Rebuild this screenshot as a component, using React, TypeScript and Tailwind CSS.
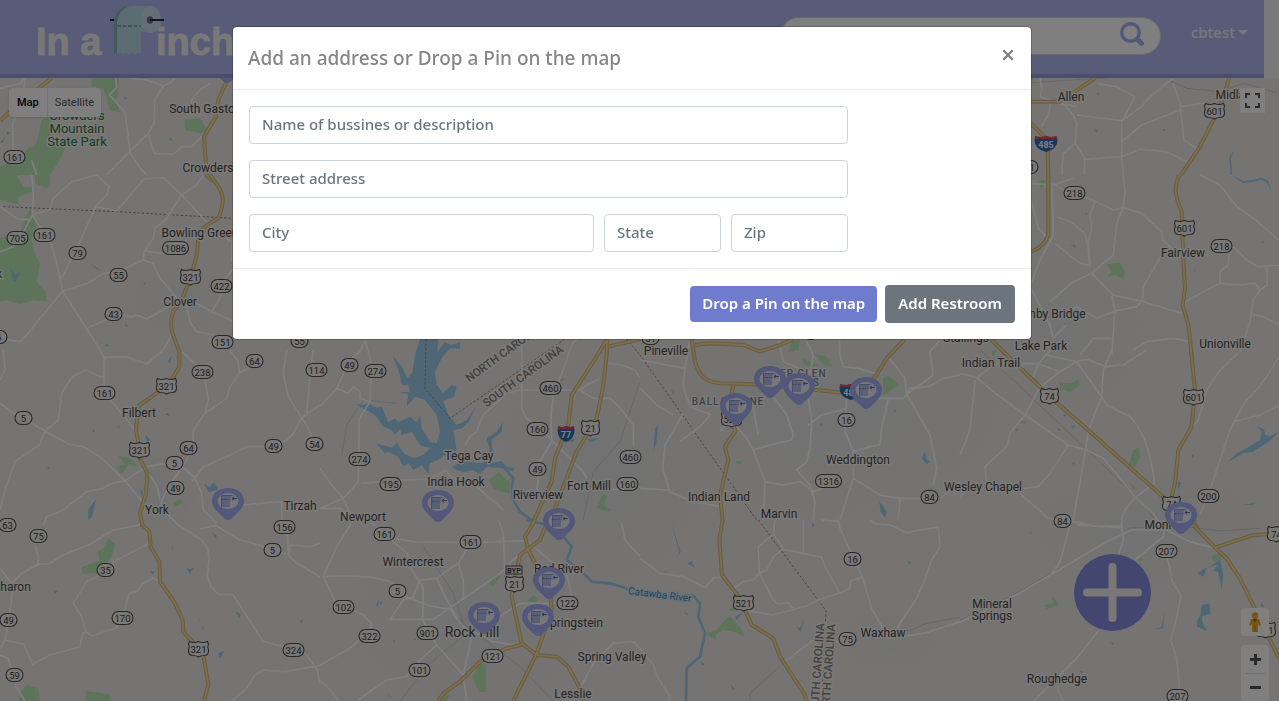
import React from "react";

type Tile = {
  x: number;
  y: number;
  roads: string;
  highways: string;
  parks: string;
  water: string;
  river?: string;
  border?: string;
  rail?: string;
};

/* Map artwork, drawn in sections at three units to the pixel. */
const tiles: Tile[] = [
  {
    x: 0,
    y: 0,
    roads:
      "M0 265L60 250L75 234M75 234L70 300L38 370L40 450M347 234L350 262L328 285L375 336L390 452M385 234L440 240L490 258L508 250L525 234M490 258L465 300L462 370L445 400L388 455L320 525M445 400L462 460L520 463L545 440L575 440L610 405M388 455L425 510L440 525M575 350L575 300L600 270L630 250M95 480L110 525",
    highways: "M0 362L60 310L155 234M682 240L655 300L648 350L612 410L620 525L640 545",
    parks:
      "M275 234H355V290L345 300L362 338L330 330L310 265L275 260ZM125 360L150 350L160 440L200 430L185 470L150 525L60 525L80 460L110 430ZM553 360L600 355L622 390L602 400L555 390ZM0 500L60 470L90 440L150 470L150 525H0Z",
    water: "M0 430L20 405L8 428ZM20 395L32 398L22 404ZM512 412L518 425L508 420ZM368 290L382 295L376 297Z",
  },
  {
    x: 960,
    y: 0,
    roads:
      "M240 234L245 270L240 290M240 290L270 300L268 340L245 380M305 305L340 345L350 370L345 430L375 475L372 525M345 430L310 460L305 525M350 345L487 362M350 320L300 310M485 365V470L375 478M410 250L470 260L525 290L515 310L487 362M640 234L600 265L560 300L545 320L487 362M640 250L660 310L665 360L672 420L715 450M660 330L545 375L485 425M485 470L540 448L620 455L690 490M485 470L490 525M660 320L735 310",
    highways: "M213 305H300L405 234M213 370L262 420L265 535M808 234L780 320L720 440L663 525",
    parks: "M213 234H225L213 245Z",
    water: "M825 450L808 470L812 525L816 525L813 475ZM410 278L420 282L412 284ZM405 388L415 392L408 398ZM608 385L618 390L610 394Z",
    rail: "M213 248L440 234M625 240L680 265L780 275L850 250L957 280",
  },
  {
    x: 0,
    y: 175,
    roads:
      "M95 0L100 60L97 120L155 210L182 315L188 348L300 525M97 120L150 103L160 70L215 20L290 0L328 35L320 60L287 95L350 108L432 12L490 8L545 60L500 130L465 160L460 190L432 230L430 255M0 95L55 133L90 133L97 120L60 190L40 215L0 230M287 95L240 200L182 315M188 348L262 325L310 295L355 290L430 255L458 265L480 310L540 380M432 228L490 235M188 348L80 480L60 500L0 490M265 458L340 425L360 420L395 425L410 420L440 432L490 405L520 385M545 60L610 130L650 170L695 200V260M545 60L590 30L610 0M560 385L570 440L590 470L640 480M570 375L635 410L700 438M635 410L665 360V325L700 280M515 480L490 525",
    highways: "M630 0C670 50 680 70 655 130C620 150 600 160 595 190L590 240L575 300L545 375L520 410C505 450 515 470 538 530",
    parks:
      "M105 0H150V25L140 40L105 25ZM0 0H50L70 35H98V50L55 65V88L0 75ZM90 100L110 150L95 190L105 240L120 265L110 320L135 350L142 380L100 375L60 388L20 375L0 380V190L60 170Z",
    water: "M30 275L45 300L60 292L45 322L38 310ZM270 265L305 288L290 282ZM430 325L438 322L434 330ZM318 505L328 512L320 516ZM375 445L385 455L378 455Z",
    border: "M10 95L350 110L700 130",
  },
  {
    x: 0,
    y: 350,
    roads:
      "M300 0L312 22V130L340 160L405 240M312 22L380 20L440 42L490 0M312 80H300L258 60L218 78L185 130L175 210L135 243L118 285L45 335L15 420L0 480M0 160L40 188L135 243L210 285L250 290L300 320L375 392L415 440L430 460L465 490L480 480M375 392L330 402L310 415L260 425L190 480L140 500L130 525M375 392L440 350L495 340L520 325L585 385M545 5L590 45L615 90L625 150L615 190M690 0L715 35L718 70L690 110L680 145L615 190L580 240L578 290L560 330L520 390L490 440L480 470M718 70L760 45M555 355L585 385L605 430L610 480L650 520M575 395L610 350L680 320L740 290H790L860 272L880 250L905 203L960 165M860 0L850 70L865 140L905 203L925 235L940 270M940 0L930 80L920 195L905 203M445 370L470 405L480 450M730 465L780 460L845 455V510M535 525L500 490M10 0L15 60L0 90",
    highways: "M538 0V50L515 90L470 130L415 168L408 240L415 280L420 325L442 370L438 430L420 490L428 530",
    parks: "M355 318L390 325L415 350L385 345L365 372L348 352L375 342ZM520 460L540 447L550 458L525 470Z",
    water:
      "M502 35L515 18L510 40ZM265 480L288 448L276 500L265 510ZM612 400L628 412L642 395L655 420L625 425ZM435 253L450 270L440 275ZM495 195L503 188L510 197ZM420 418L430 425L424 440ZM140 352L150 353L145 358ZM278 240L284 238L280 248ZM352 228L360 230L354 234Z",
  },
  {
    x: 0,
    y: 525,
    roads:
      "M65 145L115 118L148 116L190 90L270 58L340 15L420 0M105 60L115 95V118M0 130L35 175L65 145M37 200L30 260L15 345L0 370M15 345L72 358L97 418L150 390L240 365L248 325L258 320L245 275L220 235L260 170L300 150L350 105L448 55M258 320L275 333L320 318L350 308L375 250L388 205L410 200L430 175L458 160L478 168M0 392L25 400L35 440M45 480L75 528M535 0L605 45L622 70L628 100L622 150L632 185L655 208H698L790 350L860 368L915 385L935 410L950 430L960 475M695 528L740 490L765 450L790 435L850 440L945 425L960 420M645 0L720 45L770 58L815 75L865 90L890 115L960 155M860 0L866 90L872 60L930 65L960 55M600 12L650 0",
    highways: "M428 0L448 20L452 65L478 110L480 170L525 235L548 285L550 320L595 370L612 400L625 480L612 528",
    parks:
      "M245 125L298 108L293 78L310 70L325 40L345 58L340 85L322 112L300 143L248 147ZM65 495L80 480L115 490L120 528L55 528ZM258 498L328 508L330 528L256 528Z",
    water:
      "M655 385L672 378L668 390L658 402ZM560 130L568 132L580 128L570 147ZM705 258L722 268L718 278ZM900 290L908 282L905 297ZM635 22L650 32L648 40ZM450 140L465 138L458 148ZM160 196L172 198L165 206ZM515 62L520 68L516 74ZM595 275L602 290L598 285ZM606 300L614 315L608 310Z",
  },
  {
    x: 320,
    y: 335,
    roads:
      "M135 15L120 50L90 75L50 160L0 215M135 15L155 90L150 200L118 250L115 440L70 490L0 520M50 160L85 175L100 155L120 170V190L150 200M122 445L250 435L330 432L375 405L400 430L470 455L505 485L550 525M600 165L560 175L490 240L470 290L450 305L435 330M605 15V220L620 250L660 280L700 320L740 360L790 410L800 430M770 12L755 30L735 90L700 180L693 240L695 320L680 345L660 380L650 470M600 165L780 165L820 190H870L905 225L940 270V330M780 165L800 150L840 130M862 85L905 90L945 105L960 130M0 400L35 450L70 490L100 555M870 465L960 455M0 520H60L100 555",
    highways: "M862 12L820 80L755 180L745 270L705 370L695 440L640 560M862 12L860 60L850 150L830 250L770 350L740 430L705 520L680 560M865 35L960 12",
    parks: "M508 435L535 412L568 440L570 475L545 472L520 460ZM830 520L850 475L862 485L850 510L875 525L865 530Z",
    water:
      "M300 12H355L352 50L375 22L395 30L420 22V42L390 40L365 70L345 110L350 150L370 175L395 150L410 155L402 185L370 198L385 240L410 270L440 255L468 215L445 262L425 280L400 285L410 345L375 360L355 375L330 385L325 418L305 390L280 405L265 385L250 395L235 365L205 350L195 355L168 325L215 338L230 325L255 358L285 370L310 360L330 340L300 330L275 290L245 300L240 282L225 300L215 285L190 275L165 240L108 208L130 210L145 205L170 218L185 215L205 262L225 250L235 262L270 245L290 262L300 240L305 280L330 320L350 325L360 290L350 240L315 195L285 185L260 215L265 178L235 170L270 172L265 150L245 150L240 120L218 60L245 95L262 130L278 110L285 60ZM395 395L430 380L490 385L510 345L500 310L530 290L548 262L545 290L515 315L520 365L510 385L545 378L560 395L585 400L580 410L550 400L500 395L480 418L460 405L430 412L410 405ZM740 318L770 310L755 322ZM800 312L835 310L815 322ZM715 135L738 130L725 138Z",
    river: "M550 395L580 430L575 455L580 495L600 530L640 560",
    border: "M318 12L315 160L390 250L735 12M920 12L960 60",
    rail: "M230 205L130 195L80 270L65 360M960 140L900 320L820 410L790 555",
  },
  {
    x: 320,
    y: 520,
    roads:
      "M100 0L50 80L10 170M10 170L90 168L160 172L210 185L260 232L330 258L390 268L410 295L430 320M10 170L45 245L130 285L155 310L150 330L90 385L0 435M150 0L190 40L262 100L270 140L310 205L308 300L350 375L430 465L440 543M190 50L280 65L450 68L620 62M450 70L415 130L430 180V240M210 298L250 240L280 230L300 180L350 175L420 125M210 298L340 298L410 250L540 160L600 100M350 175L375 230L415 300L430 320L520 365L585 375M350 375L300 420L260 470L200 480L110 543M455 350L430 465M535 0L550 40L555 160M540 290L570 270L600 250L710 250M620 62L700 130L740 160L755 225M0 480L40 520L55 543M905 10L915 60L960 110M780 505L820 430L880 370L940 365L960 385",
    highways:
      "M645 0L615 50L625 90L690 220L695 270L650 400L580 543M680 10L660 60L600 105L575 230L605 370L650 405L710 410L745 440L780 505L790 543M605 375L560 385L480 425L420 485L370 520L355 543",
    parks:
      "M457 470L480 430L497 435V515L478 517ZM508 190L520 172L542 162L540 172L520 197ZM625 240L640 225L655 235L650 245L625 247ZM415 292L432 305L425 312ZM370 520L390 525L380 543H365Z",
    water: "M168 255L178 235L174 262ZM178 250L190 240L182 255ZM280 355L288 358L284 362ZM205 523L212 530L208 535ZM220 358L225 365L220 366Z",
    river: "M620 0L670 12L730 50L755 80L740 120L780 150L815 185L870 190L960 218",
    rail: "M310 80L400 220L430 310L600 440L700 543M440 340L330 430L240 543",
  },
  {
    x: 640,
    y: 335,
    roads:
      "M0 75L135 100L150 15M135 100L130 150L140 190L160 220L215 240M130 235L75 330L68 400L90 470L160 500L240 515M0 460L90 465M100 240L50 210L0 160M210 240L185 270L120 320M320 185L240 290M335 190L355 300M290 275L320 310L340 345L390 330L455 315L460 300L440 240L400 185M340 345L375 440L430 450L480 440L520 470L600 440M505 190L515 260L510 340L500 380L470 405L510 450L525 500L520 555M505 270L545 240L620 220M598 15L600 60L610 95L655 100L705 115M620 170L615 290L640 350V430L600 555M640 350L690 335L720 330L725 280L745 190M690 190H790L800 178L810 160L865 155L910 130L960 120M740 60L795 130L800 178L830 230L870 300L890 400L880 450M375 440L370 555M640 430L720 480L780 490H860M780 490L775 555M900 490L940 460L960 440M560 100L500 110L430 80L415 15M500 20L520 60L510 120M900 15L870 50L880 120L800 178",
    highways:
      "M155 12L165 80C180 130 200 140 240 145L340 148L530 165L620 175L690 150L740 70L795 12M165 30L210 25L310 30L360 50L420 30L460 12M280 150L270 200L285 290L255 335L265 375L240 480L248 560",
    parks:
      "M730 130L745 120L780 150L760 160L742 175L728 180ZM445 50L455 20L480 15L475 45L455 50ZM520 55L560 65L578 95L550 88ZM490 70L535 90L520 98L490 85ZM90 160L105 165L100 180ZM288 378H303V388H290ZM858 462L875 458L900 485L880 480Z",
    water: "M845 370L855 350L860 372L870 380L860 388ZM718 500L730 515L740 530L735 548L722 530ZM45 280L55 270L48 330L40 345ZM540 270L548 262L545 275ZM760 230L768 222L765 235Z",
    border: "M0 60L350 555",
  },
  {
    x: 640,
    y: 520,
    roads:
      "M0 115L60 160L130 170L195 203L222 173H245M282 205L310 185L340 180L358 160L400 240L412 252L445 248L458 265M358 160L355 80L400 42L405 0M358 160L380 150L400 110L430 85L400 42M430 88L490 100L545 112L555 140L598 218M490 0V100M320 272L398 285L500 258L540 238L600 218L630 205L632 182L668 173M595 0L600 25L668 173L695 265L730 328M690 0L705 12L750 15L800 38L850 28L895 22L900 80L875 120L850 190L830 235L770 325M520 360L435 425M750 355L860 338L960 305M0 385L40 435L55 475L88 528V543M590 365L630 355M545 0L600 5",
    highways: "M248 0L238 60L246 165L300 235L335 315L400 355L420 410L495 525L497 543",
    parks: "M200 340L230 330L255 300L270 290L300 320L315 350L280 335L250 330L225 345L230 358L210 350ZM265 270L285 262L280 275ZM70 155L82 152L80 162Z",
    water: "M90 0L122 95L112 112L118 95ZM142 132L155 122L165 145L152 135ZM285 290L310 275L290 300ZM466 318L480 325L492 298L482 335ZM180 425L195 432L188 436ZM132 275L145 282L140 286ZM800 122L815 128L810 132ZM515 5L525 15L518 22ZM270 492L285 508L278 508Z",
    river: "M0 218L70 235L130 225L160 228L180 250L175 290L195 340L180 410L140 445L138 543",
    border: "M355 0L558 272L545 543",
    rail: "M435 425L330 520V543M800 335L860 310L960 292",
  },
  {
    x: 960,
    y: 175,
    roads:
      "M215 25L280 30L340 10M275 25L340 60M275 30L280 180L240 255L213 325M375 65L460 105L490 98L495 50L490 0M490 98L545 115L605 170L608 195L640 225M490 98L470 145L460 240L395 295M405 80L390 120L395 160L385 200L390 275M290 125L330 140L375 175L385 220L388 272L360 265L285 205M395 295L460 360L550 380L665 415M395 295L340 320L270 380M455 360L465 405L455 540M605 240L550 335L548 375L530 395L465 408L410 430L350 395L320 415M213 340L270 450L280 490L320 450M360 540L400 490H455M520 525L560 500L640 490L690 500M720 0L780 30L830 95L880 130L910 155L955 195M672 382L780 325L830 330L885 325L900 345L880 375L870 440L850 500M780 325V290L805 270L808 235M820 215L860 255L895 275L957 270M920 275L922 330L900 345M880 418L910 425L957 450M215 80L235 160L275 200",
    highways: "M265 0V175C262 200 240 220 213 230M658 0C640 40 645 60 665 110L668 200L670 260L675 340L668 390L685 450L695 540M90 490L140 540",
    parks: "M440 268L480 263L495 290L490 312L465 300L440 305L455 290ZM237 15L262 15L245 42ZM95 530L110 525L105 540Z",
    water: "M332 212L345 208L348 218ZM375 115L382 115L380 120ZM700 282L708 288L704 288ZM480 300L486 298L484 304ZM905 200L915 198L910 203ZM815 0L850 18L880 15L905 8L925 18L935 55L922 24L905 14L880 20L848 24Z",
  },
  {
    x: 960,
    y: 350,
    roads:
      "M0 70L50 83L100 45L180 35L190 55M50 83L100 125L195 195L325 285L380 300L430 325L525 440L580 490L610 540M180 40L235 42L270 0M235 42L220 80M350 35L300 65L240 112L195 195L150 250L140 290L75 350L80 400M350 35L425 140L440 165L510 200C560 250 580 350 583 400L530 440C490 480 480 500 485 540M455 0L430 60L425 140L385 240L375 310L340 510M260 15L350 35L380 28L440 50L490 45L560 0M325 285L270 370L235 410L190 415M180 430L265 505L340 515L400 528H485M845 0L780 60L740 120L715 210L695 235M957 20L920 80L890 120L855 155L810 240L740 450L720 490M820 215L900 195L957 165M45 90L30 240L0 315M235 42L300 65M0 440L20 420",
    highways: "M125 0L270 140L390 245L610 442L680 480L715 540M693 0L705 120L695 230L655 300L645 400L635 440",
    parks: "M298 97L330 100L355 90L360 105L330 125L300 115ZM505 345L520 300L538 292L540 320L525 350ZM505 395L525 410L522 420ZM180 212L200 215L195 225ZM95 10L108 0L100 22Z",
    water: "M805 335L830 310L860 295L900 270L905 245L888 228L912 238L915 255L932 258L957 245L930 272L880 305L850 310ZM652 395L664 398L655 420ZM335 338L348 336L340 345ZM310 195L318 192L315 203ZM333 228L345 226L340 236ZM165 240L174 236L170 245ZM292 235L302 238L298 244ZM694 315L702 312L700 328ZM848 465L880 460L890 456L875 466ZM515 322L521 322L518 332Z",
    rail: "M60 0L175 105L360 280L560 470L600 540",
  },
  {
    x: 960,
    y: 525,
    roads:
      "M330 0L300 110L275 148M0 292L150 220L275 148L440 50L515 15H620L690 50L760 68M485 0L490 45L475 90M525 105L610 35L615 0M610 60L630 130L635 165L663 215L645 300L632 345L650 400L658 490M415 318L350 400L290 460L220 528M295 460V500L310 528M350 0L480 8",
    highways: "M700 0L765 68L800 100L840 160L957 400M765 68L880 30L930 28",
    parks: "M250 240L280 235L275 210L298 240L260 252ZM530 103L545 95L550 105L535 110ZM755 95L780 82L788 105L760 110Z",
    water: "M780 105L740 130L730 155L712 145L735 130L775 118L758 138L775 140L785 195L790 150ZM725 240L748 235L752 265L725 275L728 295L742 318L712 305L710 290L722 268ZM612 260L610 310L585 312L605 306ZM905 232L912 245H902ZM452 350L462 355L458 360ZM360 438L370 440L364 444ZM208 20L215 22L212 26Z",
    rail: "M0 285L150 215L300 130M500 10L640 0L780 18L900 10",
  },
];

type Label = [string, number, number, number?];
const places: Label[] = [
  ["South Gastonia", 210, 109],
  ["Crowders", 208, 168],
  ["Bowling Green", 200, 233],
  ["Clover", 180, 302],
  ["Filbert", 139, 413],
  ["York", 157, 510],
  ["Sharon", 12, 587],
  ["Tirzah", 300, 506],
  ["Newport", 363, 517],
  ["Tega Cay", 469, 456],
  ["India Hook", 456, 482],
  ["Riverview", 538, 495],
  ["Fort Mill", 589, 486],
  ["Wintercrest", 413, 562],
  ["Red River", 559, 569],
  ["Rock Hill", 472, 633, 14],
  ["Springstein", 573, 623],
  ["Spring Valley", 612, 657],
  ["Lesslie", 573, 694],
  ["Pineville", 666, 351],
  ["Weddington", 858, 460],
  ["Indian Land", 719, 497],
  ["Marvin", 779, 514],
  ["Waxhaw", 883, 633],
  ["Allen", 1071, 97],
  ["Midland", 1237, 95],
  ["Fairview", 1183, 253],
  ["Hemby Bridge", 1048, 314],
  ["Stallings", 966, 338],
  ["Lake Park", 1041, 346],
  ["Unionville", 1225, 344],
  ["Indian Trail", 991, 363],
  ["Wesley Chapel", 983, 487],
  ["Monroe", 1165, 525],
  ["Mineral", 992, 604],
  ["Springs", 992, 616],
  ["Roughedge", 1057, 679],
];

const stateRoutes: Label[] = [
  ["161", 14, 157], ["705", 17, 238], ["161", 44, 235], ["79", 77, 253], ["1086", 175, 248],
  ["55", 118, 275], ["422", 221, 286], ["43", 113, 314], ["151", 222, 342], ["55", 299, 341],
  ["5", -2, 337], ["238", 202, 372], ["64", 254, 361], ["114", 316, 370], ["49", 349, 365],
  ["274", 375, 371], ["161", 104, 393], ["5", 23, 418], ["64", 188, 448], ["49", 273, 446],
  ["54", 314, 444], ["274", 359, 459], ["5", 174, 463], ["49", 175, 488], ["195", 390, 484],
  ["63", 7, 525], ["75", 38, 536], ["156", 284, 527], ["5", 272, 550], ["35", 105, 570],
  ["170", 122, 618], ["49", 8, 620], ["324", 293, 650], ["59", 14, 675], ["161", 384, 534],
  ["161", 470, 542], ["5", 397, 591], ["102", 343, 607], ["322", 369, 636], ["901", 427, 633],
  ["101", 419, 670], ["121", 492, 656], ["122", 567, 603], ["460", 550, 388], ["160", 537, 429],
  ["49", 537, 469], ["460", 630, 457], ["160", 627, 484], ["51", 650, 338], ["16", 846, 420],
  ["1316", 828, 481], ["84", 929, 497], ["16", 852, 559], ["75", 847, 639], ["218", 1074, 193],
  ["218", 1221, 246], ["51", 1029, 167], ["84", 1062, 521], ["200", 1208, 496], ["207", 1166, 551],
  ["207", 1177, 696],
];

const usRoutes: Label[] = [
  ["321", 190, 277], ["321", 166, 386], ["321", 139, 450], ["321", 198, 649], ["21", 590, 428],
  ["21", 514, 584], ["521", 731, 419], ["521", 743, 603], ["601", 1214, 111], ["601", 1184, 228],
  ["601", 1193, 397], ["74", 1049, 396], ["74", 1171, 504], ["74", 1276, 534], ["601", 1265, 630],
];

const pins: [number, number][] = [
  [227, 83], [228, 520], [438, 522], [559, 540], [549, 599], [484, 634], [538, 636],
  [736, 425], [770, 398], [799, 405], [1181, 534], [866, 409],
];

function routeWidth(text: string) {
  return text.length <= 2 ? 17 : text.length === 3 ? 21 : 26;
}

function Interstate({ x, y, text }: { x: number; y: number; text: string }) {
  const w = text.length > 2 ? 11.5 : 8.5;
  return (
    <g transform={`translate(${x} ${y})`}>
      <path d={`M${-w + 1} -8Q${-w / 2} -6 0 -8Q${w / 2} -6 ${w - 1} -8L${w} -4Q${w} 5 0 8Q${-w} 5 ${-w} -4Z`} fill="#2d6cb5" />
      <path d={`M${-w + 1} -8Q${-w / 2} -6 0 -8Q${w / 2} -6 ${w - 1} -8L${w} -5H${-w}Z`} fill="#e05058" />
      <text y="4" textAnchor="middle" fontSize="9" fontWeight="700" fill="#fff">{text}</text>
    </g>
  );
}

function Pin({ x, y }: { x: number; y: number }) {
  return (
    <g transform={`translate(${x} ${y})`}>
      <path d="M-16 -19C-16 -27 -9 -32 0 -32S16 -27 16 -19C16 -12 9 -7 3 -1Q0 1 -3 -1C-9 -7 -16 -12 -16 -19Z" fill="#a6aef2" />
      <ellipse cx="0" cy="-19" rx="10.500" ry="8" fill="#eeeef4" />
      <path d="M-7 -13V-23Q-7 -25 -5 -25H5V-20L2 -19V-13Z" fill="#b6bdee" />
      <ellipse cx="5.500" cy="-21.500" rx="3" ry="3.200" fill="#dfe2fb" />
      <path d="M-6.500 -13V-24.500H4" stroke="#8790cc" strokeWidth="0.800" fill="none" />
      <path d="M-6 -20.500H2" stroke="#6972bb" strokeWidth="0.800" fill="none" strokeDasharray="1.500 1" />
      <path d="M4 -21.500H9M6 -23L4 -21.500L6 -20" stroke="#5f66a8" strokeWidth="0.900" fill="none" />
    </g>
  );
}

function MapArt() {
  return (
    <svg
      role="img"
      aria-label="Map of restrooms"
      viewBox="0 78 1279 623"
      preserveAspectRatio="xMinYMin slice"
      className="absolute inset-0 h-full w-full bg-[#ebe8e4] font-['Roboto',sans-serif]"
    >
      <defs>
        <radialGradient id="town">
          <stop offset="0" stopColor="#e4e4e5" />
          <stop offset="1" stopColor="#e4e4e5" stopOpacity="0" />
        </radialGradient>
      </defs>
      <g fill="url(#town)">
        <ellipse cx="470" cy="620" rx="120" ry="90" />
        <ellipse cx="600" cy="470" rx="110" ry="120" />
        <ellipse cx="820" cy="410" rx="190" ry="110" />
        <ellipse cx="1150" cy="530" rx="120" ry="60" />
        <ellipse cx="180" cy="300" rx="50" ry="35" />
        <ellipse cx="160" cy="490" rx="40" ry="40" />
        <ellipse cx="1040" cy="330" rx="110" ry="90" />
        <ellipse cx="890" cy="640" rx="50" ry="30" />
      </g>
      {tiles.map((t) => (
        <g key={`a${t.x}-${t.y}`} transform={`translate(${t.x} ${t.y}) scale(0.33333)`}>
          <path d={t.parks} fill="#bbe6b4" />
          <path d={t.water} fill="#9ccdea" />
          {t.river && <path d={t.river} fill="none" stroke="#9ccdea" strokeWidth="8" strokeLinejoin="round" />}
          {t.rail && <path d={t.rail} fill="none" stroke="#cfcdc9" strokeWidth="3" />}
          {t.border && <path d={t.border} fill="none" stroke="#8d8b88" strokeWidth="3" strokeDasharray="7 6" />}
        </g>
      ))}
      {tiles.map((t) => (
        <g key={`b${t.x}-${t.y}`} transform={`translate(${t.x} ${t.y}) scale(0.33333)`} fill="none" strokeLinejoin="round">
          <path d={t.roads} stroke="#ffffff" strokeWidth="5" />
        </g>
      ))}
      {tiles.map((t) => (
        <g key={`c${t.x}-${t.y}`} transform={`translate(${t.x} ${t.y}) scale(0.33333)`} fill="none" strokeLinejoin="round">
          <path d={t.highways} stroke="#d6b87a" strokeWidth="12" />
          <path d={t.highways} stroke="#f4dca0" strokeWidth="6" />
        </g>
      ))}

      <g textAnchor="middle" fill="#4a4a4a" stroke="#f4f2ef" strokeWidth="3" strokeLinejoin="round" paintOrder="stroke">
        {places.map(([text, x, y, size]) => (
          <text key={`${text}${y}`} x={x} y={y + 4} fontSize={size ?? 12}>{text}</text>
        ))}
        <g fill="#2c7a3f" fontSize="13">
          <text x="77" y="120">Crowders</text>
          <text x="77" y="133">Mountain</text>
          <text x="77" y="146">State Park</text>
          <text x="-1" y="278">k</text>
        </g>
        <g fill="#7d869b" fontSize="10" fontWeight="500" letterSpacing="1">
          <text x="728" y="405">BALLANTYNE</text>
          <text x="794" y="377">RIVER GLEN</text>
          <text x="804" y="386">HILLS</text>
        </g>
        <g fill="#85827f" fontSize="11.500" fontWeight="500">
          <text transform="translate(506 351) rotate(-36)" y="4">NORTH CAROLINA</text>
          <text transform="translate(523 376) rotate(-36)" y="4">SOUTH CAROLINA</text>
          <text transform="translate(817 671) rotate(-86)" y="4">SOUTH CAROLINA</text>
          <text transform="translate(828 672) rotate(-86)" y="4">NORTH CAROLINA</text>
        </g>
        <text transform="translate(660 594) rotate(7)" y="4" fontSize="10" fill="#3e87bd" stroke="#d5e7f2">Catawba River</text>
      </g>

      <g textAnchor="middle" fontSize="9.500">
        {stateRoutes.map(([text, x, y]) => (
          <g key={`${text}-${x}`} transform={`translate(${x + 0.5} ${y})`}>
            <rect x={-routeWidth(text) / 2} y="-6.500" width={routeWidth(text)} height="13" rx="6.500" fill="#f2f0ee" stroke="#505050" strokeWidth="1.100" />
            <text y="3.500" fill="#3c3c3c">{text}</text>
          </g>
        ))}
        {usRoutes.map(([text, x, y]) => {
          const h = text.length > 2 ? 10 : 9;
          return (
            <g key={`${text}-${x}`} transform={`translate(${x + 0.5} ${y})`}>
              <path
                d={`M${-h + 1} -7.5Q${-h / 2} -5.5 0 -7.5Q${h / 2} -5.5 ${h - 1} -7.5L${h} -5Q${h - 1.5} -2 ${h} 1Q${h + 0.5} 6 ${h - 4} 6.5Q2 6.5 0 8Q-2 6.5 ${-h + 4} 6.5Q${-h - 0.5} 6 ${-h} 1Q${-h + 1.5} -2 ${-h} -5Z`}
                fill="#f2f0ee"
                stroke="#505050"
                strokeWidth="1.100"
              />
              <text y="4" fill="#3c3c3c">{text}</text>
            </g>
          );
        })}
        <g transform="translate(514 570)">
          <rect x="-8" y="-4" width="16" height="8" fill="#f2f0ee" stroke="#505050" />
          <text y="3" fontSize="7.500" fontWeight="700" fill="#3c3c3c">BYP</text>
        </g>
        <Interstate x={1046} y={144} text="485" />
        <Interstate x={566} y={434} text="77" />
        <Interstate x={851} y={392} text="485" />
      </g>
      <ellipse cx="811" cy="337" rx="6" ry="3" fill="#505050" />

      {pins.map(([x, y]) => (
        <Pin key={`${x}-${y}`} x={x} y={y} />
      ))}
    </svg>
  );
}

function Logo() {
  return (
    <svg viewBox="0 0 250 72" role="img" aria-label="In a Pinch" className="h-[72px] w-[250px] shrink-0 font-['Liberation_Sans',sans-serif]">
      <g fontSize="38" fontWeight="700" fill="#f4f1ee" stroke="#f4f1ee" strokeWidth="0.800" strokeLinejoin="round">
        <text x="36" y="55">In a</text>
        <text x="156" y="55">inch</text>
      </g>
      <path d="M110 20H115" stroke="#24284a" strokeWidth="2" />
      <path d="M114 54V22Q115 7 130 6H151V32H141V54L138 52.500L135 54.500L132 52.500L129 54.500L126 52.500L123 54.500L120 52.500L117 54.500Z" fill="#b9dbe2" />
      <path d="M114 54V22Q115 7 130 6Q119 9 117 22V54Z" fill="#86b4ba" />
      <path d="M117 26H141" stroke="#6f9fae" strokeWidth="1.500" strokeDasharray="4 1.500" />
      <ellipse cx="151" cy="19.500" rx="10" ry="13.500" fill="#c8dde8" />
      <ellipse cx="150" cy="20" rx="3.200" ry="3.800" fill="#6c7488" />
      <path d="M150 20H164" stroke="#24284a" strokeWidth="2" />
    </svg>
  );
}

const field =
  "h-[38px] w-full min-w-0 rounded border border-[#ced4da] bg-white px-3 pb-[2px] text-[15px] font-medium text-[#495057] placeholder:text-[#6c757d] placeholder:opacity-100 outline-none";

function AddressDialog() {
  return (
    <div className="fixed inset-0 bg-black/50 pr-[15px] pt-[26px]">
      <div
        role="dialog"
        aria-modal="true"
        aria-labelledby="dialog-title"
        className="mx-auto w-full max-w-[800px] rounded-[5px] border border-black/20 bg-white bg-clip-padding"
      >
        <div className="flex items-start justify-between border-b border-[#e9ecef] p-4 pl-[15px]">
          <h5 id="dialog-title" className="text-[19px] leading-[30px] font-medium text-[#868686]">Add an address or Drop a Pin on the map</h5>
          <button type="button" aria-label="Close" className="flex h-6 w-[14px] items-center justify-center">
            <svg viewBox="0 0 12 12" className="h-3 w-3" stroke="#7c7c7c" strokeWidth="2.200">
              <path d="M1.300 1.300L10.700 10.700M10.700 1.300L1.300 10.700" />
            </svg>
          </button>
        </div>
        <form>
          <div className="p-4">
            <div className="grid w-[599px] max-w-full gap-4">
              <input aria-label="Name of bussines or description" placeholder="Name of bussines or description" className={field} />
              <input aria-label="Street address" placeholder="Street address" className={field} />
              <div className="grid grid-cols-[345fr_117fr_117fr] gap-[10px]">
                <input aria-label="City" placeholder="City" className={field} />
                <input aria-label="State" placeholder="State" className={field} />
                <input aria-label="Zip" placeholder="Zip" className={field} />
              </div>
            </div>
          </div>
          <div className="flex items-center justify-end gap-2 border-t border-[#e9ecef] p-4">
            <button type="button" className="h-9 rounded bg-[#6f7bcd] px-3 pb-[2px] text-[15px] font-semibold text-white">Drop a Pin on the map</button>
            <button type="button" className="h-[38px] rounded bg-[#6c757d] px-[13px] pb-[2px] text-[15px] font-semibold text-white">Add Restroom</button>
          </div>
        </form>
      </div>
    </div>
  );
}

export default function App() {
  return (
    <div className="flex h-screen flex-col overflow-hidden bg-[#f2f2f2] font-['Noto_Sans',sans-serif]">
      <header className="mr-[15px] flex items-center border-b-4 border-[#959cd6] bg-[#b2b9f2] pb-[2px] pr-4">
        <Logo />
        <form className="ml-auto flex h-[38px] w-[381px] items-center rounded-full border border-[#d5d5dc] bg-white pl-4 pr-4">
          <input aria-label="Search" className="min-w-0 flex-1 outline-none" />
          <button type="button" aria-label="Search" className="pb-1">
            <svg viewBox="0 0 24 24" className="h-6 w-6" fill="none" stroke="#a8b0f0">
              <circle cx="10.500" cy="10.500" r="8.800" strokeWidth="3.400" />
              <path d="M17.500 17.500L21.500 21.500" strokeWidth="5" strokeLinecap="round" />
            </svg>
          </button>
        </form>
        <button type="button" className="ml-[30px] flex items-center gap-[3px] pb-2 text-[15px] leading-6 font-medium text-[#f4f1ee]">
          cbtest
          <svg viewBox="0 0 10 5" className="h-[5px] w-[10px]" fill="currentColor">
            <path d="M0 0H10L5 5Z" />
          </svg>
        </button>
      </header>

      <main className="relative min-h-0 flex-1">
        <MapArt />
        <div className="absolute left-[9px] top-[10px] flex h-[29px] items-center rounded-sm bg-white font-['Roboto',sans-serif] text-[11px] shadow">
          <button type="button" className="h-full border-r border-[#e6e6e6] px-2 pt-px font-medium text-black">Map</button>
          <button type="button" className="h-full px-[7px] pt-px text-[#565656]">Satellite</button>
        </div>
        <button type="button" aria-label="Toggle fullscreen" className="absolute right-[14px] top-[10px] flex h-[25px] w-[25px] items-center justify-center bg-white">
          <svg viewBox="0 0 15 15" className="h-[15px] w-[15px]" fill="none" stroke="#555" strokeWidth="2">
            <path d="M1 5V1H5M10 1H14V5M14 10V14H10M5 14H1V10" />
          </svg>
        </button>
        <button type="button" aria-label="Add a restroom" className="absolute bottom-[70px] right-[128px]">
          <svg viewBox="0 0 77 77" className="h-[77px] w-[77px]">
            <circle cx="38.500" cy="38.500" r="38.500" fill="#868fe0" />
            <path d="M38.500 13V64M13 38.500H64" stroke="#f4f1ee" strokeWidth="8" strokeLinecap="round" />
          </svg>
        </button>
        <button type="button" aria-label="Street view" className="absolute bottom-[65px] right-[10px] flex h-7 w-7 items-center justify-center rounded-sm bg-white">
          <svg viewBox="0 0 12 20" className="h-5 w-3">
            <circle cx="6" cy="3.500" r="3.300" fill="#f2ad2e" />
            <path d="M2 7H10L12 13L10.500 14L9 12V20H3V12L1.500 14L0 13Z" fill="#f2ad2e" />
            <path d="M4 7H8L6 10ZM6 13V20" fill="#c05a20" stroke="#b87518" strokeWidth="0.700" />
          </svg>
        </button>
        <div className="absolute bottom-0 right-[10px] flex w-7 flex-col rounded-sm bg-white">
          <button type="button" aria-label="Zoom in" className="flex h-7 items-center justify-center">
            <svg viewBox="0 0 11 11" className="h-[11px] w-[11px]" stroke="#555" strokeWidth="3"><path d="M5.500 0V11M0 5.500H11" /></svg>
          </button>
          <span className="mx-1 h-px bg-[#dcdcdc]" />
          <button type="button" aria-label="Zoom out" className="flex h-[27px] items-center justify-center">
            <svg viewBox="0 0 11 11" className="h-[11px] w-[11px]" stroke="#555" strokeWidth="3"><path d="M0 5.500H11" /></svg>
          </button>
        </div>
      </main>

      <AddressDialog />
    </div>
  );
}
